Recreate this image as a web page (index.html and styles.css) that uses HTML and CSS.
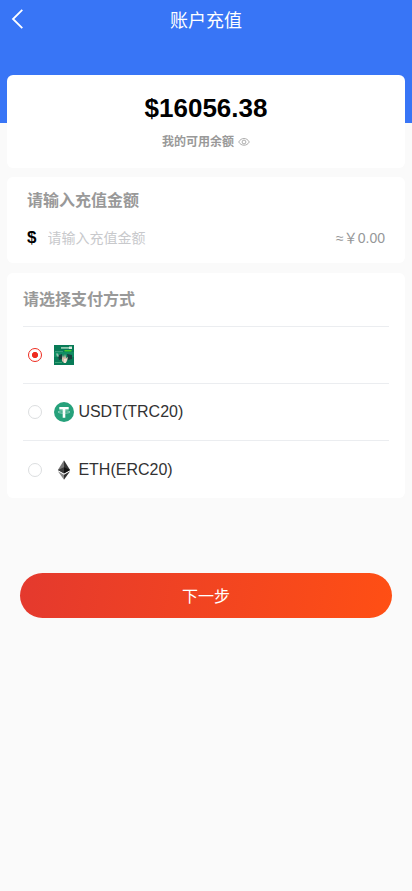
FILE: index.html
```
<!DOCTYPE html>
<html lang="zh-CN">
<head>
<meta charset="utf-8">
<meta name="viewport" content="width=device-width, initial-scale=1">
<title>账户充值</title>
<link rel="stylesheet" href="styles.css">
</head>
<body>
<header class="hero">
  <nav class="navbar">
    <svg class="back" viewBox="0 0 14 22" fill="none" stroke="#fff" stroke-width="1.8"><path d="M12.3 1.8 3 11l9.3 9.2"/></svg>
    <h1 class="title">账户充值</h1>
  </nav>
</header>
<main class="content">
  <section class="card balance">
    <div class="balance-value">$16056.38</div>
    <div class="balance-label">
      <span>我的可用余额</span>
      <svg class="eye" viewBox="0 0 12 10" fill="none" stroke="#999" stroke-width=".8"><path d="M.7 5C3.2.3 8.8.3 11.3 5 8.8 9.300 3.200 9.300.7 5Z"/><circle cx="6" cy="5" r="1.900"/></svg>
    </div>
  </section>
  <section class="card amount">
    <h2 class="heading">请输入充值金额</h2>
    <div class="amount-row">
      <span class="currency">$</span>
      <input class="amount-input" type="text" placeholder="请输入充值金额">
      <span class="converted">≈￥0.00</span>
    </div>
  </section>
  <section class="card methods">
    <h2 class="heading">请选择支付方式</h2>
    <div class="method">
      <span class="radio checked"></span>
      <svg class="logo" viewBox="0 0 20 20">
        <rect width="20" height="20" fill="#087b57"/>
        <path d="M0 7h20v5H0z" fill="#118d63"/>
        <path d="M7 2h8v1.800H7z" fill="#8fc9ae"/>
        <path d="M15 1.500h3v2.500h-3z" fill="#d9e9df"/>
        <path d="M10.500 5h7v1.500h-7z" fill="#3fce2f"/>
        <path d="M1 6h8v1H1z" fill="#38997a"/>
        <path d="M4 10.500 8 9v5l-3 1zM13 9l5 1v4l-4 1z" fill="#173f3c"/>
        <path d="M2 8.500h2l1 3H3z" fill="#91c1ad"/>
        <path d="m8 13 1-3 1 3 1-4 1 4 2-1-1 4-2 2h-1l-2-2z" fill="#d5bdab"/>
        <path d="M10 14h3l-1 4h-2z" fill="#efe0d3"/>
        <path d="M1 17h7v1H1z" fill="#38a373"/>
      </svg>
    </div>
    <div class="method">
      <span class="radio"></span>
      <svg class="logo" viewBox="0 0 20 20"><circle cx="10" cy="10" r="10" fill="#26a17b"/><path d="M5.300 5h9.400v2.400h-3.400v8.400H8.700V7.400H5.300z" fill="#fff"/><ellipse cx="10" cy="10" rx="6" ry="1.200" fill="none" stroke="#d9f0e8" stroke-width=".6"/></svg>
      <span>USDT(TRC20)</span>
    </div>
    <div class="method">
      <span class="radio"></span>
      <svg class="logo" viewBox="0 0 20 20"><path d="M10 .3v12.900L3.900 9.900z" fill="#777"/><path d="m10 .3 6.100 9.600-6.100 3.300z" fill="#333"/><path d="m10 7.200 6.100 2.700-6.100 3.500z" fill="#111"/><path d="M10 7.200v6.200L3.900 9.900z" fill="#3c3c3c"/><path d="M3.900 11.200 10 14.700v5z" fill="#888"/><path d="M16.100 11.200 10 14.700v5z" fill="#333"/></svg>
      <span>ETH(ERC20)</span>
    </div>
  </section>
  <button class="next" type="button">下一步</button>
</main>
</body>
</html>
```
FILE: styles.css
```
* { box-sizing: border-box; }
body {
  margin: 0;
  min-height: 891px;
  background: #fafafa;
  color: #323233;
  font-family: "Liberation Sans", "Noto Sans CJK SC", sans-serif;
}
h1, h2 { margin: 0; }
.hero { height: 123px; background: #3875f6; }
.navbar {
  display: grid;
  grid-template-columns: 40px 1fr 40px;
  align-items: center;
  height: 42px;
}
.back { width: 14px; height: 22px; margin: -5px 0 0 10px; }
.title { color: #fff; font-size: 18px; font-weight: 400; text-align: center; line-height: 42px; }
.content { margin-top: -48px; padding: 0 7px; }
.card { background: #fff; border-radius: 6px; }
.balance { height: 93px; padding-top: 17px; text-align: center; }
.balance-value { color: #000; font-size: 26px; font-weight: 700; line-height: 32px; }
.balance-label {
  display: flex;
  justify-content: center;
  align-items: center;
  gap: 4px;
  margin-top: 9px;
  color: #999;
  font-size: 12px;
  font-weight: 700;
  line-height: 18px;
}
.eye { width: 12px; height: 10px; }
.amount { height: 86px; margin-top: 9px; padding: 12px 20px 0; }
.heading { color: #999; font-size: 16px; font-weight: 700; line-height: 24px; }
.amount-row { display: flex; align-items: center; height: 24px; margin-top: 13px; }
.currency { width: 20.500px; color: #000; font-size: 17px; font-weight: 700; }
.amount-input {
  flex: 1;
  min-width: 0;
  height: 24px;
  padding: 0;
  border: 0;
  outline: 0;
  background: transparent;
  font: inherit;
  font-size: 14px;
}
.amount-input::placeholder { color: #c8c9cc; }
.converted { margin-bottom: 2px; color: #969799; font-size: 14px; }
.methods { height: 225px; margin-top: 10px; padding: 15px 16px 0; }
.methods .heading { height: 38px; }
.method {
  display: flex;
  align-items: center;
  height: 57px;
  padding-left: 5px;
  border-top: 1px solid #ebedf0;
  font-size: 16px;
}
.method:last-child { height: 58px; }
.radio { width: 14px; height: 14px; border: 1px solid #dcdee0; border-radius: 50%; }
.radio.checked { border-color: #ee2c20; background: radial-gradient(circle, #ee2c20 2.800px, #fff 3.300px); }
.logo { width: 20px; height: 20px; margin: 0 4.400px 0 12px; }
.next {
  display: block;
  width: 372px;
  height: 45px;
  margin: 75px auto 0;
  padding: 0 0 2px;
  border: 0;
  border-radius: 23px;
  background: linear-gradient(100deg, #e4392e, #ff4f14);
  color: #fff;
  font: inherit;
  font-size: 16px;
}
```
